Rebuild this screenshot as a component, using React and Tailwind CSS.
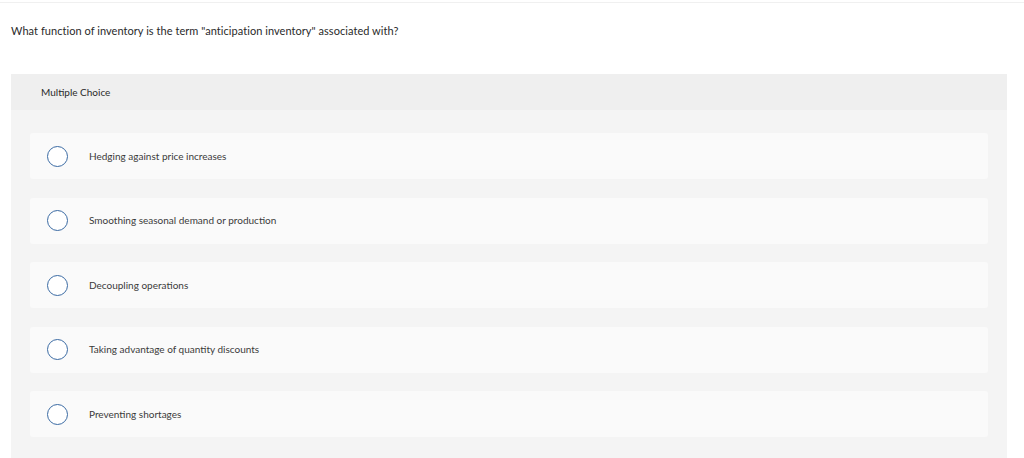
export default function App() {
  const options = [
    "Hedging against price increases",
    "Smoothing seasonal demand or production",
    "Decoupling operations",
    "Taking advantage of quantity discounts",
    "Preventing shortages",
  ];
  return (
    <div className="w-[1024px] h-[458px] bg-white overflow-hidden" style={{ fontFamily: "Lato, 'Open Sans', sans-serif" }}>
      <div className="h-[2px]" />
      <div className="h-px bg-[#f0f0f0]" />
      <div className="px-[11px] pt-[21px] text-[11px] leading-[14px] text-[#2a2a2a] tracking-[0.05px]">
        What function of inventory is the term "anticipation inventory" associated with?
      </div>
      <div className="mx-[11px] mt-[36px] w-[996px] bg-[#f4f4f4] pb-[60px]">
        <div className="h-[36px] bg-[#efefef] flex items-center pl-[30px] text-[10px] text-[#2a2a2a]">
          Multiple Choice
        </div>
        <div className="flex flex-col gap-[18.5px] pt-[23px] px-[19px]">
          {options.map((o) => (
            <div key={o} className="h-[46px] bg-[#fafafa] rounded-[3px] flex items-center">
              <div className="ml-[17px] w-[21px] h-[21px] rounded-full border border-[#3a6aa3] bg-white" />
              <div className="ml-[21px] text-[10px] text-[#3a3a3a]">{o}</div>
            </div>
          ))}
        </div>
      </div>
    </div>
  );
}
